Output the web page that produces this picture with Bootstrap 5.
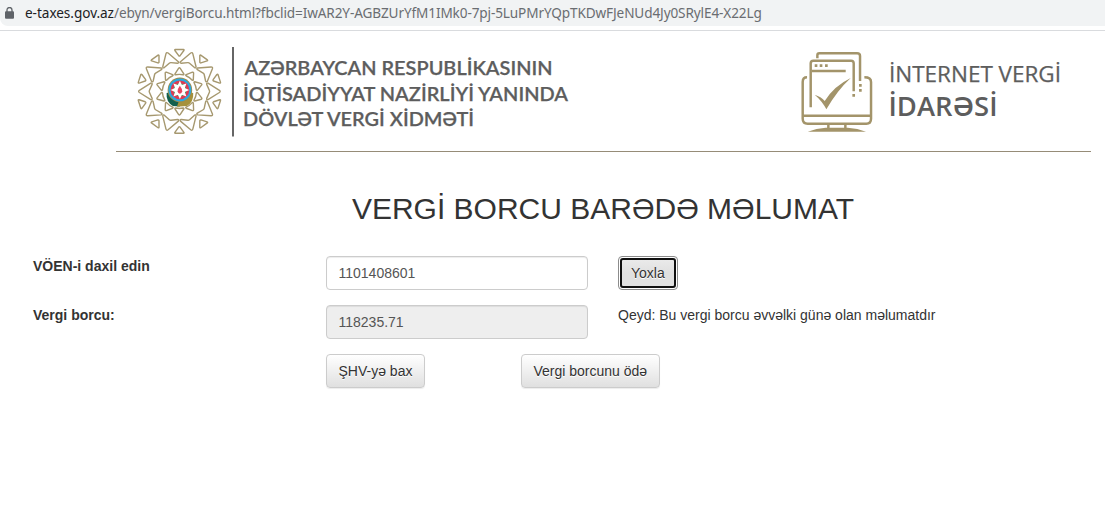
<!DOCTYPE html>
<html lang="az">
<head>
<meta charset="utf-8">
<meta name="viewport" content="width=device-width, initial-scale=1">
<title>Vergi borcu barədə məlumat</title>
<link href="https://cdn.jsdelivr.net/npm/bootstrap@5.3.0/dist/css/bootstrap.min.css" rel="stylesheet">
<style>
  html, body { overflow: hidden; height: 100%; }
  body { font: 14px/20px "Liberation Sans", Arial, sans-serif; color: #333; background: #fff; }
  .urlbar { height: 26px; background: #f1f3f4; border-bottom-left-radius: 8px; padding-left: 5px; }
  .urlbar-text { font: 13.6px/26px "Noto Sans", sans-serif; letter-spacing: -.12px; color: #6a6d71; white-space: pre; margin-left: 11px; }
  .urlbar-text b { font-weight: 400; color: #202124; letter-spacing: -.05px; }
  .chrome-gap { height: 5px; border-bottom: 1px solid #d9dbde; }
  .viewport-clip { overflow: hidden; }
  .page { width: 1170px; margin-left: 18px; }
  .masthead { height: 121px; border-bottom: 1px solid #968c78; margin-left: 97.5px; width: 975px; }
  .masthead svg { display: block; flex: none; }
  .masthead text { fill: #5d5d5d; }
  .org-name { font: 600 20px Lato, "Open Sans", sans-serif; }
  .portal-name { font-family: "Open Sans", "Noto Sans", sans-serif; }
  h1.page-title { font-size: 30px; line-height: 40px; font-weight: 400; margin: 37px 0 27px; text-align: center; color: #333; }
  .page .row { --bs-gutter-x: 30px; margin: 0; }
  .field-label { font-weight: 700; }
  .line { height: 49px; }
  .page .form-control { height: 34px; font-size: 14px; line-height: 20px; padding: 6px 12px; border: 1px solid #ccc; border-radius: 4px; color: #555; box-shadow: inset 0 1px 1px rgba(0,0,0,.075); }
  .page .form-control[readonly] { background: #eee; }
  .page .btn { height: 34px; font-size: 14px; line-height: 20px; padding: 6px 12px; border: 1px solid #ccc; border-radius: 4px; color: #333; background: linear-gradient(#fff, #e0e0e0); text-shadow: 0 1px 0 #fff; box-shadow: inset 0 1px 0 rgba(255,255,255,.15), 0 1px 1px rgba(0,0,0,.075); }
  .page .btn.btn-focused { position: relative; background: linear-gradient(#ececec, #e0e0e0 50%); border-color: #8c8c8c; box-shadow: inset 0 0 0 1px #fff; }
  .btn-focused::after { content: ""; position: absolute; inset: 1px; border: 2px solid #101010; border-radius: 3px; }
</style>
</head>
<body>
<div class="urlbar d-flex align-items-center">
  <svg width="9" height="12" viewBox="0 0 9 12"><path d="M2 5V3a2.4 2.4 0 0 1 5 0v2" fill="none" stroke="#5f6368" stroke-width="1.3"/><rect x="0" y="4.3" width="9" height="7.4" rx="1" fill="#5f6368"/></svg>
  <span class="urlbar-text"><b>e-taxes.gov.az</b>/ebyn/vergiBorcu.html?fbclid=IwAR2Y-AGBZUrYfM1IMk0-7pj-5LuPMrYQpTKDwFJeNUd4Jy0SRylE4-X22Lg</span>
</div>
<div class="chrome-gap"></div>
<div class="viewport-clip">
<main class="page">
  <header class="masthead d-flex justify-content-between">
    <svg width="460" height="120" viewBox="115.5 31 460 120">
      <defs>
        <g id="petal">
          <path d="M-4.1-41.9H4.1Q5-41.8 4.5-40.9L.7-35.7Q0-35-.7-35.7L-4.5-40.9Q-5-41.8-4.1-41.9Z"/>
          <path d="M-.7-23.2Q0-24 .7-23.2L4.4-17.6Q4.8-16.6 3.8-16.6Q0-17.5-3.8-16.6Q-4.8-16.6-4.4-17.6Z"/>
          <path d="M-1.1-40Q0-41.5 1.1-40L8.2-28.6Q8.7-26.9 7-27.3L.9-30Q0-30.4-.9-30L-7-27.3Q-8.7-26.9-8.2-28.6Z" transform="rotate(18)"/>
        </g>
      </defs>
      <g transform="translate(178.9 91.4)" fill="none" stroke="#a6986f" stroke-width="1.4" stroke-linejoin="round">
        <use href="#petal"/><use href="#petal" transform="rotate(36)"/><use href="#petal" transform="rotate(72)"/><use href="#petal" transform="rotate(108)"/><use href="#petal" transform="rotate(144)"/><use href="#petal" transform="rotate(180)"/><use href="#petal" transform="rotate(216)"/><use href="#petal" transform="rotate(252)"/><use href="#petal" transform="rotate(288)"/><use href="#petal" transform="rotate(324)"/>
      </g>
      <g transform="translate(179.4 89.9)">
        <path d="M-13.3 3Q-14 12-7 16L0 16.5V8L-9 2Z" fill="#12604e"/>
        <path d="M13.3 3Q14 12 7 16L-3 16.8L-1 11L9 2Z" fill="#a5913b"/>
        <circle r="12.3" fill="#a08a48"/>
        <circle r="11.4" fill="#2aa9df"/>
        <circle r="9.4" fill="#de3b52"/>
        <circle r="6.6" fill="#4c9b62"/>
        <path d="M0-9.2L2-4.9 6.5-6.5 4.9-2 9.2 0 4.9 2 6.5 6.5 2 4.9 0 9.2-2 4.9-6.5 6.5-4.9 2-9.2 0-4.9-2-6.5-6.5-2-4.9Z" fill="#fff"/>
        <circle r="5.4" fill="#fff"/>
        <path d="M0-4.2Q2.6-.8 2.3 1.4Q2 3.6 0 3.8Q-2 3.6-2.3 1.4Q-2.6-.8 0-4.2Z" fill="#e7455c"/>
      </g>
      <rect x="231.5" y="47" width="2" height="89.5" fill="#666"/>
      <g class="org-name" stroke="#5d5d5d" stroke-width=".25">
        <text x="244" y="75" textLength="308" lengthAdjust="spacingAndGlyphs">AZƏRBAYCAN RESPUBLİKASININ</text>
        <text x="242.5" y="100.5" textLength="325" lengthAdjust="spacingAndGlyphs">İQTİSADİYYAT NAZİRLİYİ YANINDA</text>
        <text x="242.5" y="126" textLength="231" lengthAdjust="spacingAndGlyphs">DÖVLƏT VERGİ XİDMƏTİ</text>
      </g>
    </svg>
    <svg width="290.5" height="120" viewBox="800 31 290.5 120">
      <g transform="translate(795.7 48) scale(.33333)" fill="none" stroke="#a3946a" stroke-width="7.4">
        <path d="M65 31V22Q65 16 71 16H184Q193 16 193 24V99"/>
        <path d="M45 178V46Q45 38 53 38H166Q174 38 174 46V130"/>
        <path d="M48 69H150"/>
        <path d="M34 88Q21 88 21 102V212Q21 227 36 227H212Q226 227 226 212V102Q226 88 206 88M21 203H226"/>
        <path d="M98 228V241M149 228V241"/>
        <g fill="#a3946a" stroke="none">
          <path d="M57 49h8v8h-8zM72 49h8v8h-8zM88 49h8v8h-8zM190 108h8v8h-8zM190 123h8v8h-8zM170 138h8v8h-8z"/>
          <path d="M36 251Q62 241 90 239H156Q186 241 211 251Z"/>
          <path d="M57 140Q76 146 87 159Q115 114 165 90Q124 128 92 184Q80 160 57 140Z"/>
        </g>
      </g>
      <g class="portal-name">
        <text x="889" y="82" font-size="21.7" textLength="172" lengthAdjust="spacingAndGlyphs" stroke="#5d5d5d" stroke-width=".25">İNTERNET VERGİ</text>
        <text x="888.5" y="116" font-size="26.5" font-weight="600" textLength="109" lengthAdjust="spacingAndGlyphs">İDARƏSİ</text>
      </g>
    </svg>
  </header>
  <h1 class="page-title">VERGİ BORCU BARƏDƏ MƏLUMAT</h1>
  <div class="row line">
    <label class="col-3 field-label" for="voen">VÖEN-i daxil edin</label>
    <div class="col-3"><input id="voen" class="form-control" value="1101408601"></div>
    <div class="col-6"><button class="btn btn-focused">Yoxla</button></div>
  </div>
  <div class="row line">
    <label class="col-3 field-label" for="debt">Vergi borcu:</label>
    <div class="col-3"><input id="debt" class="form-control" value="118235.71" readonly></div>
    <div class="col-6">Qeyd: Bu vergi borcu əvvəlki günə olan məlumatdır</div>
  </div>
  <div class="row line">
    <div class="col-2 offset-3"><button class="btn">ŞHV-yə bax</button></div>
    <div class="col-4"><button class="btn">Vergi borcunu ödə</button></div>
  </div>
</main>
</div>
<script src="https://cdn.jsdelivr.net/npm/bootstrap@5.3.0/dist/js/bootstrap.bundle.min.js"></script>
</body>
</html>
